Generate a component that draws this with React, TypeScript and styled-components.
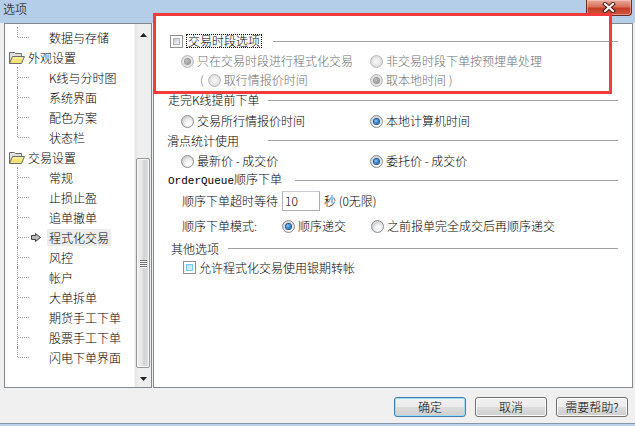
import React from 'react'
import styled, { createGlobalStyle } from 'styled-components'

const GlobalStyle = createGlobalStyle`
  html, body {
    margin: 0;
    padding: 0;
  }
  body {
    font-family: 'Noto Sans CJK SC', 'Liberation Sans', sans-serif;
    font-size: 12px;
    font-weight: 300;
    color: #000;
  }
  * {
    box-sizing: border-box;
  }
`

const Window = styled.div`
  position: relative;
  width: 635px;
  height: 426px;
  overflow: hidden;
  display: flex;
  flex-direction: column;
  background: linear-gradient(180deg, #b4cde8 0%, #c6d9ee 60%, #bcd2ea 100%);
`

const TitleBar = styled.div`
  height: 23px;
  flex: none;
  display: flex;
  justify-content: space-between;
  align-items: flex-start;
  padding: 0 3px 0 3px;
`

const Title = styled.div`
  line-height: 18px;
  font-size: 12px;
`

const CloseButton = styled.div`
  width: 46px;
  height: 16px;
  border: 1px solid #6f2a20;
  border-top: none;
  border-radius: 0 0 4px 4px;
  background: linear-gradient(180deg, #e9ab9b 0%, #d8705a 45%, #c43d26 55%, #d0573c 100%);
  box-shadow: inset 0 0 0 1px rgba(255, 220, 210, 0.45);
  display: flex;
  align-items: center;
  justify-content: center;
`

const Client = styled.div`
  height: 401px;
  flex: none;
  display: flex;
  flex-direction: column;
  background: #f0f0f0;
  border-bottom: 1px solid #8596ab;
`

const Main = styled.div`
  height: 365px;
  display: flex;
  gap: 1px;
  padding-left: 4px;
`

const TreePanel = styled.div`
  width: 148px;
  height: 100%;
  border: 1px solid #828790;
  background: #fff;
  display: flex;
`

const TreeList = styled.div`
  flex: 1;
  padding-top: 3px;
  display: flex;
  flex-direction: column;
`

const TreeRow = styled.div`
  height: 20px;
  display: flex;
  align-items: center;
`

const Connector = styled.span<{ $last?: boolean }>`
  position: relative;
  flex: none;
  width: 12px;
  height: 100%;
  margin-left: 12px;

  &::before {
    content: '';
    position: absolute;
    left: 0;
    top: 0;
    height: ${({ $last }) => ($last ? '50%' : '100%')};
    border-left: 1px dotted #9a9a9a;
  }
  &::after {
    content: '';
    position: absolute;
    left: 1px;
    top: 50%;
    width: 11px;
    border-top: 1px dotted #9a9a9a;
  }
`

const MarkSlot = styled.span`
  width: 18px;
  flex: none;
  display: flex;
  align-items: center;
  padding-left: 2px;
`

const FolderIcon = styled.span`
  flex: none;
  display: flex;
  margin-left: 4px;
  margin-right: 1px;
`

const TreeLabel = styled.span<{ $selected?: boolean }>`
  line-height: 17px;
  padding: 0 2px;
  white-space: nowrap;
  background: ${({ $selected }) => ($selected ? '#ededed' : 'transparent')};
`

const ScrollBar = styled.div`
  width: 17px;
  flex: none;
  display: flex;
  flex-direction: column;
  background: linear-gradient(90deg, #e6e6e6 0%, #f0f0f0 30%, #ededed 100%);
  border-left: 1px solid #f4f4f4;
`

const ScrollButton = styled.div<{ $down?: boolean }>`
  height: 17px;
  flex: none;
  display: flex;
  justify-content: center;
  align-items: ${({ $down }) => ($down ? 'center' : 'flex-end')};
  padding-bottom: ${({ $down }) => ($down ? '0' : '4px')};
`

const Track = styled.div`
  flex: 1;
  padding: 0 1px;
`

const Thumb = styled.div<{ $offset: number; $size: number }>`
  margin-top: ${({ $offset }) => $offset}px;
  height: ${({ $size }) => $size}px;
  border: 1px solid #979797;
  border-radius: 2px;
  background: linear-gradient(90deg, #f2f2f2 0%, #e4e4e4 45%, #d4d4d4 55%, #dddddd 100%);
  box-shadow: inset 0 0 0 1px #f7f7f7;
  display: flex;
  flex-direction: column;
  align-items: center;
  justify-content: center;
  gap: 1px;
`

const Grip = styled.span`
  width: 7px;
  height: 1px;
  background: #6e6e6e;
  box-shadow: 0 1px 0 #fbfbfb;
`

const OptionsPanel = styled.div`
  width: 480px;
  height: 100%;
  border: 1px solid #828790;
  background: #fff;
  padding: 7px 14px 0 13px;
  display: flex;
  flex-direction: column;
`

const Row = styled.div<{ $h: number; $pad?: number }>`
  height: ${({ $h }) => $h}px;
  flex: none;
  display: flex;
  align-items: center;
  padding-left: ${({ $pad }) => $pad ?? 0}px;
  white-space: nowrap;
`

const HeaderLabel = styled.div<{ $w: number; $pad: number }>`
  width: ${({ $w }) => $w}px;
  flex: none;
  padding-left: ${({ $pad }) => $pad}px;
  display: flex;
  align-items: center;
`

const Rule = styled.div`
  flex: 1;
  height: 1px;
  background: #a0a0a0;
`

const Cell = styled.div<{ $w?: number }>`
  width: ${({ $w }) => ($w ? `${$w}px` : 'auto')};
  flex: none;
  display: flex;
  align-items: center;
`

const Text = styled.span<{ $disabled?: boolean }>`
  line-height: 14px;
  color: ${({ $disabled }) => ($disabled ? '#6d6d6d' : '#000')};
`

const Mono = styled.span`
  font-family: 'Liberation Mono', monospace;
  font-size: 11px;
  font-weight: 400;
`

const FocusText = styled.span`
  line-height: 12px;
  padding: 0 1px;
  border: 1px dotted #000;
`

const Radio = styled.span<{ $checked?: boolean; $disabled?: boolean }>`
  width: 13px;
  height: 13px;
  flex: none;
  margin-right: 3px;
  border-radius: 50%;
  border: 1px solid ${({ $disabled }) => ($disabled ? '#b8b8b8' : '#8a8d91')};
  background: ${({ $disabled }) =>
    $disabled
      ? 'radial-gradient(circle, #f2f2f2 0 2px, #dcdcdc 5.5px)'
      : 'radial-gradient(circle at 60% 65%, #ffffff 0 2px, #d6d6d6 6px)'};
  display: flex;
  align-items: center;
  justify-content: center;

  &::after {
    content: '';
    width: 5px;
    height: 5px;
    border-radius: 50%;
    background: ${({ $checked, $disabled }) =>
      !$checked
        ? 'transparent'
        : $disabled
          ? 'radial-gradient(circle at 40% 40%, #c8c8c8, #7b7b7b)'
          : 'radial-gradient(circle at 40% 40%, #7fd0ff, #1a63b5 70%, #0d3f7a)'};
    box-shadow: ${({ $checked, $disabled }) =>
      $checked ? ($disabled ? '0 0 0 1px #9a9a9a' : '0 0 0 1px #1b4f8c') : 'none'};
  }
`

const Check = styled.span<{ $hot?: boolean }>`
  width: 13px;
  height: 13px;
  flex: none;
  margin-right: 3px;
  border: 1px solid #8e8f8f;
  background: #fff;
  padding: 2px;
  display: flex;

  &::after {
    content: '';
    flex: 1;
    border: 1px solid ${({ $hot }) => ($hot ? '#79c6f9' : '#aeb3b9')};
    background: ${({ $hot }) =>
      $hot ? 'linear-gradient(135deg, #b9e3f9, #e9f7fe)' : 'linear-gradient(135deg, #cbcfd5, #f6f6f6)'};
  }
`

const Paren = styled.span`
  color: #6d6d6d;
  margin-right: 4px;
  line-height: 14px;
`

const NumberBox = styled.div`
  width: 38px;
  height: 20px;
  flex: none;
  margin: 0 4px;
  border: 1px solid #abadb3;
  border-top-color: #c9cbd0;
  padding: 2px 0 0 2px;
  line-height: 14px;
`

const ButtonBar = styled.div`
  height: 35px;
  display: flex;
  justify-content: flex-end;
  align-items: flex-start;
  gap: 9px;
  padding: 9px 7px 0 0;
`

const Button = styled.div<{ $default?: boolean }>`
  width: 72px;
  height: 20px;
  display: flex;
  align-items: center;
  justify-content: center;
  border: 1px solid ${({ $default }) => ($default ? '#3c7fb1' : '#707070')};
  border-radius: 3px;
  background: linear-gradient(180deg, #f2f2f2 0%, #ebebeb 50%, #dddddd 51%, #cfcfcf 100%);
  box-shadow: inset 0 0 0 1px ${({ $default }) => ($default ? '#9fdcf8' : '#fbfbfb')};
  line-height: 14px;
`

const Highlight = styled.div`
  position: absolute;
  left: 153px;
  top: 13px;
  width: 459px;
  height: 81px;
  border: 3px solid #f23c3c;
  background: linear-gradient(#fff, #fff) top / 100% 8px no-repeat;
  pointer-events: none;
`

const Folder = () => (
  <svg width="16" height="13" viewBox="0 0 16 13">
    <path d="M0.5 12.5V1.5H5.5L6.5 2.5H12.5V5.5" fill="#e2e2dc" stroke="#6c6c6c" />
    <path d="M0.5 12.5L3.5 5.5H15.5L12.5 12.5Z" fill="#f3e278" stroke="#6c6c6c" />
    <path d="M4.5 7H14" stroke="#fdf6c2" />
  </svg>
)

const PointerArrow = () => (
  <svg width="10" height="9" viewBox="0 0 10 9">
    <path d="M0.5 2.5H4.5V0.5L9.5 4.5L4.5 8.5V6.5H0.5Z" fill="#b9b9b9" stroke="#3f3f3f" />
  </svg>
)

const CloseGlyph = () => (
  <svg width="14" height="11" viewBox="0 0 14 11">
    <path d="M3 2L11 9M11 2L3 9" stroke="#4a140c" strokeWidth="4" strokeLinecap="square" />
    <path d="M3 2L11 9M11 2L3 9" stroke="#ffffff" strokeWidth="2.2" strokeLinecap="square" />
  </svg>
)

const Triangle: React.FC<{ down?: boolean }> = ({ down }) => (
  <svg width="7" height="4" viewBox="0 0 7 4">
    <path d={down ? 'M0 0H7L3.5 4Z' : 'M0 4H7L3.5 0Z'} fill="#222" />
  </svg>
)

type TreeItem = { label: string; folder?: boolean; last?: boolean; selected?: boolean }

const treeItems: TreeItem[] = [
  { label: '数据与存储', last: true },
  { label: '外观设置', folder: true },
  { label: 'K线与分时图' },
  { label: '系统界面' },
  { label: '配色方案' },
  { label: '状态栏', last: true },
  { label: '交易设置', folder: true },
  { label: '常规' },
  { label: '止损止盈' },
  { label: '追单撤单' },
  { label: '程式化交易', selected: true },
  { label: '风控' },
  { label: '帐户' },
  { label: '大单拆单' },
  { label: '期货手工下单' },
  { label: '股票手工下单' },
  { label: '闪电下单界面', last: true },
]

const App: React.FC = () => {
  return (
    <Window>
      <GlobalStyle />
      <TitleBar>
        <Title>选项</Title>
        <CloseButton>
          <CloseGlyph />
        </CloseButton>
      </TitleBar>
      <Client>
        <Main>
          <TreePanel>
            <TreeList>
              {treeItems.map((item) =>
                item.folder ? (
                  <TreeRow key={item.label}>
                    <FolderIcon>
                      <Folder />
                    </FolderIcon>
                    <TreeLabel>{item.label}</TreeLabel>
                  </TreeRow>
                ) : (
                  <TreeRow key={item.label}>
                    <Connector $last={item.last} />
                    <MarkSlot>{item.selected && <PointerArrow />}</MarkSlot>
                    <TreeLabel $selected={item.selected}>{item.label}</TreeLabel>
                  </TreeRow>
                )
              )}
            </TreeList>
            <ScrollBar>
              <ScrollButton>
                <Triangle />
              </ScrollButton>
              <Track>
                <Thumb $offset={117} $size={210}>
                  <Grip />
                  <Grip />
                  <Grip />
                  <Grip />
                </Thumb>
              </Track>
              <ScrollButton $down>
                <Triangle down />
              </ScrollButton>
            </ScrollBar>
          </TreePanel>

          <OptionsPanel>
            <Row $h={20}>
              <HeaderLabel $w={106} $pad={3}>
                <Check />
                <FocusText>交易时段选项</FocusText>
              </HeaderLabel>
              <Rule />
            </Row>
            <Row $h={20} $pad={14}>
              <Cell $w={189}>
                <Radio $checked $disabled />
                <Text $disabled>只在交易时段进行程式化交易</Text>
              </Cell>
              <Cell>
                <Radio $disabled />
                <Text $disabled>非交易时段下单按预埋单处理</Text>
              </Cell>
            </Row>
            <Row $h={18} $pad={33}>
              <Cell $w={170}>
                <Paren>(</Paren>
                <Radio $disabled />
                <Text $disabled>取行情报价时间</Text>
              </Cell>
              <Cell>
                <Radio $checked $disabled />
                <Text $disabled>取本地时间 )</Text>
              </Cell>
            </Row>

            <Row $h={22}>
              <HeaderLabel $w={101} $pad={1}>
                <Text>走完K线提前下单</Text>
              </HeaderLabel>
              <Rule />
            </Row>
            <Row $h={20} $pad={14}>
              <Cell $w={189}>
                <Radio />
                <Text>交易所行情报价时间</Text>
              </Cell>
              <Cell>
                <Radio $checked />
                <Text>本地计算机时间</Text>
              </Cell>
            </Row>

            <Row $h={19}>
              <HeaderLabel $w={101} $pad={0}>
                <Text>滑点统计使用</Text>
              </HeaderLabel>
              <Rule />
            </Row>
            <Row $h={22} $pad={14}>
              <Cell $w={189}>
                <Radio />
                <Text>最新价 - 成交价</Text>
              </Cell>
              <Cell>
                <Radio $checked />
                <Text>委托价 - 成交价</Text>
              </Cell>
            </Row>

            <Row $h={16}>
              <HeaderLabel $w={128} $pad={1}>
                <Text>
                  <Mono>OrderQueue</Mono>顺序下单
                </Text>
              </HeaderLabel>
              <Rule />
            </Row>
            <Row $h={26} $pad={15}>
              <Text>顺序下单超时等待</Text>
              <NumberBox>10</NumberBox>
              <Text>秒 (0无限)</Text>
            </Row>
            <Row $h={24} $pad={15}>
              <Cell $w={100}>
                <Text>顺序下单模式:</Text>
              </Cell>
              <Cell $w={89}>
                <Radio $checked />
                <Text>顺序递交</Text>
              </Cell>
              <Cell>
                <Radio />
                <Text>之前报单完全成交后再顺序递交</Text>
              </Cell>
            </Row>

            <Row $h={21}>
              <HeaderLabel $w={61} $pad={4}>
                <Text>其他选项</Text>
              </HeaderLabel>
              <Rule />
            </Row>
            <Row $h={17} $pad={16}>
              <Check $hot />
              <Text>允许程式化交易使用银期转帐</Text>
            </Row>
          </OptionsPanel>
        </Main>

        <ButtonBar>
          <Button $default>确定</Button>
          <Button>取消</Button>
          <Button>需要帮助?</Button>
        </ButtonBar>
      </Client>
      <Highlight />
    </Window>
  )
}

export default App
